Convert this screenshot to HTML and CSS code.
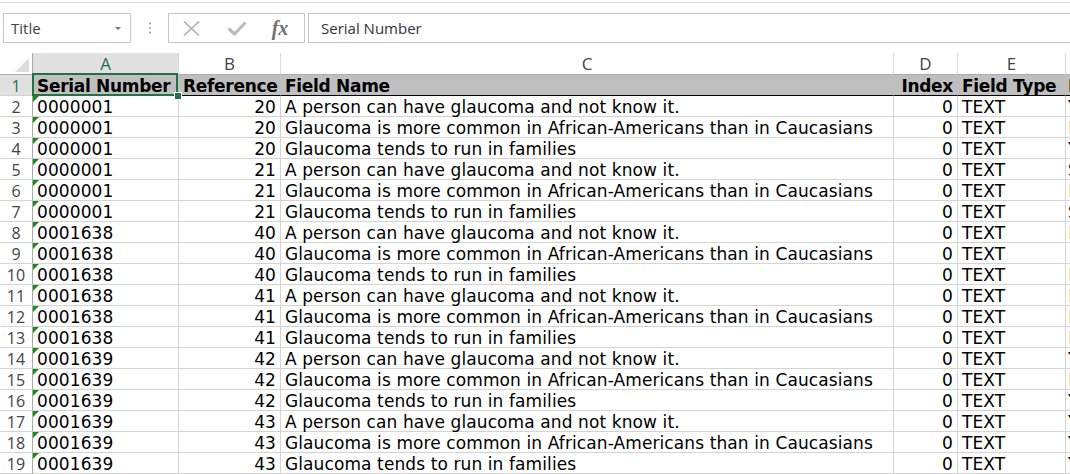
FILE: index.html
```html
<!DOCTYPE html>
<html>
<head>
<meta charset="utf-8">
<link rel="stylesheet" href="styles.css">
</head>
<body>
<div class="topline"></div>
<div class="toolbar">
  <div class="namebox"><span>Title</span><span class="caret"></span></div>
  <div class="dots"><svg width="4" height="12" viewBox="0 0 4 12"><circle cx="2" cy="1.5" r="1" fill="#9a9a9a"/><circle cx="2" cy="6" r="1" fill="#9a9a9a"/><circle cx="2" cy="10.5" r="1" fill="#9a9a9a"/></svg></div>
  <div class="fxbox">
    <div class="fxbtn"><svg width="17" height="15" viewBox="0 0 17 15"><path d="M1 0.5 L16 14.5 M16 0.5 L1 14.5" stroke="#b0b0b0" stroke-width="1.6" fill="none"/></svg></div>
    <div class="fxbtn"><svg width="20" height="15" viewBox="0 0 20 15"><path d="M1.5 7.5 L7.5 13 L18.5 1.5" stroke="#bcbcbc" stroke-width="3.2" fill="none"/></svg></div>
    <div class="fxbtn fxtext">fx</div>
  </div>
  <div class="formula">Serial Number</div>
</div>
<div class="sheet">
  <div class="corner"><svg width="14" height="14" viewBox="0 0 14 14"><path d="M14 0 L14 14 L0 14 Z" fill="#dcdcdc"/></svg></div>
  <div class="ch sel">A</div><div class="ch">B</div><div class="ch">C</div><div class="ch">D</div><div class="ch">E</div><div class="ch last"></div>

  <div class="rh rsel">1</div>
  <div class="c hd a1">Serial Number<div class="selbox"></div><div class="handle"></div></div>
  <div class="c hd">Reference</div><div class="c hd">Field Name</div><div class="c hd num">Index</div><div class="c hd">Field Type</div><div class="c hd f">N</div>

  <div class="rh">2</div><div class="c tx">0000001</div><div class="c num">20</div><div class="c">A person can have glaucoma and not know it.</div><div class="c num">0</div><div class="c">TEXT</div><div class="c f">Y</div>
  <div class="rh">3</div><div class="c tx">0000001</div><div class="c num">20</div><div class="c">Glaucoma is more common in African-Americans than in Caucasians</div><div class="c num">0</div><div class="c">TEXT</div><div class="c f o">N</div>
  <div class="rh">4</div><div class="c tx">0000001</div><div class="c num">20</div><div class="c">Glaucoma tends to run in families</div><div class="c num">0</div><div class="c">TEXT</div><div class="c f">Y</div>
  <div class="rh">5</div><div class="c tx">0000001</div><div class="c num">21</div><div class="c">A person can have glaucoma and not know it.</div><div class="c num">0</div><div class="c">TEXT</div><div class="c f">S</div>
  <div class="rh">6</div><div class="c tx">0000001</div><div class="c num">21</div><div class="c">Glaucoma is more common in African-Americans than in Caucasians</div><div class="c num">0</div><div class="c">TEXT</div><div class="c f o">N</div>
  <div class="rh">7</div><div class="c tx">0000001</div><div class="c num">21</div><div class="c">Glaucoma tends to run in families</div><div class="c num">0</div><div class="c">TEXT</div><div class="c f">S</div>
  <div class="rh">8</div><div class="c tx">0001638</div><div class="c num">40</div><div class="c">A person can have glaucoma and not know it.</div><div class="c num">0</div><div class="c">TEXT</div><div class="c f o">N</div>
  <div class="rh">9</div><div class="c tx">0001638</div><div class="c num">40</div><div class="c">Glaucoma is more common in African-Americans than in Caucasians</div><div class="c num">0</div><div class="c">TEXT</div><div class="c f"></div>
  <div class="rh">10</div><div class="c tx">0001638</div><div class="c num">40</div><div class="c">Glaucoma tends to run in families</div><div class="c num">0</div><div class="c">TEXT</div><div class="c f o">N</div>
  <div class="rh">11</div><div class="c tx">0001638</div><div class="c num">41</div><div class="c">A person can have glaucoma and not know it.</div><div class="c num">0</div><div class="c">TEXT</div><div class="c f o">N</div>
  <div class="rh">12</div><div class="c tx">0001638</div><div class="c num">41</div><div class="c">Glaucoma is more common in African-Americans than in Caucasians</div><div class="c num">0</div><div class="c">TEXT</div><div class="c f o">N</div>
  <div class="rh">13</div><div class="c tx">0001638</div><div class="c num">41</div><div class="c">Glaucoma tends to run in families</div><div class="c num">0</div><div class="c">TEXT</div><div class="c f o">N</div>
  <div class="rh">14</div><div class="c tx">0001639</div><div class="c num">42</div><div class="c">A person can have glaucoma and not know it.</div><div class="c num">0</div><div class="c">TEXT</div><div class="c f">Y</div>
  <div class="rh">15</div><div class="c tx">0001639</div><div class="c num">42</div><div class="c">Glaucoma is more common in African-Americans than in Caucasians</div><div class="c num">0</div><div class="c">TEXT</div><div class="c f o">N</div>
  <div class="rh">16</div><div class="c tx">0001639</div><div class="c num">42</div><div class="c">Glaucoma tends to run in families</div><div class="c num">0</div><div class="c">TEXT</div><div class="c f">Y</div>
  <div class="rh">17</div><div class="c tx">0001639</div><div class="c num">43</div><div class="c">A person can have glaucoma and not know it.</div><div class="c num">0</div><div class="c">TEXT</div><div class="c f">Y</div>
  <div class="rh">18</div><div class="c tx">0001639</div><div class="c num">43</div><div class="c">Glaucoma is more common in African-Americans than in Caucasians</div><div class="c num">0</div><div class="c">TEXT</div><div class="c f">Y</div>
  <div class="rh">19</div><div class="c tx">0001639</div><div class="c num">43</div><div class="c">Glaucoma tends to run in families</div><div class="c num">0</div><div class="c">TEXT</div><div class="c f">Y</div>
</div>
</body>
</html>
```
FILE: styles.css
```css
* { box-sizing: border-box; }
body {
  margin: 0;
  width: 1070px;
  height: 474px;
  overflow: hidden;
  background: #fff;
  font-family: "Open Sans", "Noto Sans", sans-serif;
}
.topline {
  height: 3px;
  border-bottom: 1px solid #d9d9d9;
}
.toolbar {
  display: flex;
  height: 30px;
  margin: 10px 0 10px 3px;
}
.namebox {
  width: 128px;
  border: 1px solid #c6c6c6;
  display: flex;
  align-items: center;
  justify-content: space-between;
  padding: 0 9px 0 7px;
  font-size: 15px;
  color: #444;
}
.caret {
  width: 0;
  height: 0;
  border-left: 3px solid transparent;
  border-right: 3px solid transparent;
  border-top: 3px solid #777;
}
.dots {
  width: 37px;
  display: flex;
  align-items: center;
  justify-content: center;
}
.fxbox {
  width: 137px;
  border: 1px solid #c6c6c6;
  display: flex;
  align-items: center;
}
.fxbtn {
  width: 45px;
  display: flex;
  align-items: center;
  justify-content: center;
}
.fxtext {
  font-family: "Liberation Serif", serif;
  font-style: italic;
  font-weight: bold;
  font-size: 20px;
  color: #707070;
  width: 42px;
}
.formula {
  flex: 1;
  margin-left: 3px;
  margin-right: -4px;
  border: 1px solid #c6c6c6;
  padding-left: 12px;
  display: flex;
  align-items: center;
  font-size: 15px;
  color: #333;
}
.sheet {
  display: grid;
  grid-template-columns: 33px 146px 102px 613px 64px 108px 1fr;
  grid-template-rows: 22px repeat(19, 21px);
}
.corner {
  border-right: 1px solid #ababab;
  border-bottom: 1px solid #ababab;
  display: flex;
  align-items: flex-end;
  justify-content: flex-end;
  padding: 0 3px 2px 0;
}
.ch {
  border-right: 1px solid #dadada;
  border-bottom: 1px solid #ababab;
  text-align: center;
  font-size: 17px;
  line-height: 21px;
  color: #444;
  overflow: hidden;
}
.ch.sel {
  background: #e1e1e1;
  color: #217346;
}
.ch.last { border-right: none; }
.rh {
  border-right: 1px solid #ababab;
  border-bottom: 1px solid #d4d4d4;
  text-align: center;
  font-size: 16px;
  line-height: 20px;
  padding-top: 1px;
  color: #444;
}
.rh.rsel {
  background: #e1e1e1;
  color: #217346;
}
.c {
  border-right: 1px solid #d4d4d4;
  border-bottom: 1px solid #d4d4d4;
  padding: 1px 3px 0 4px;
  line-height: 20px;
  font-family: "DejaVu Sans", Verdana, sans-serif;
  font-size: 17px;
  letter-spacing: 0.1px;
  color: #000;
  white-space: nowrap;
}
.c.num {
  text-align: right;
  padding-right: 4px;
}
.c.hd {
  background: #bfbfbf;
  font-weight: bold;
  letter-spacing: -0.3px;
  border-right-color: #bfbfbf;
  border-bottom-color: #000;
  padding-top: 1px;
}
.c.a1 { position: relative; }
.selbox {
  position: absolute;
  left: -1px;
  top: -2px;
  width: 146px;
  height: 23px;
  border: 2px solid #217346;
  z-index: 2;
}
.handle {
  position: absolute;
  left: 142px;
  top: 18px;
  width: 6px;
  height: 6px;
  background: #217346;
  outline: 1px solid #fff;
  z-index: 3;
}
.c.tx { position: relative; }
.c.tx::before {
  content: "";
  position: absolute;
  left: 0;
  top: 0;
  border-top: 6px solid #1d8a1d;
  border-right: 6px solid transparent;
}
.c.f {
  border-right: none;
  padding-left: 2px;
  overflow: hidden;
}
.c.f.o { color: #f0ad6a; }
```
